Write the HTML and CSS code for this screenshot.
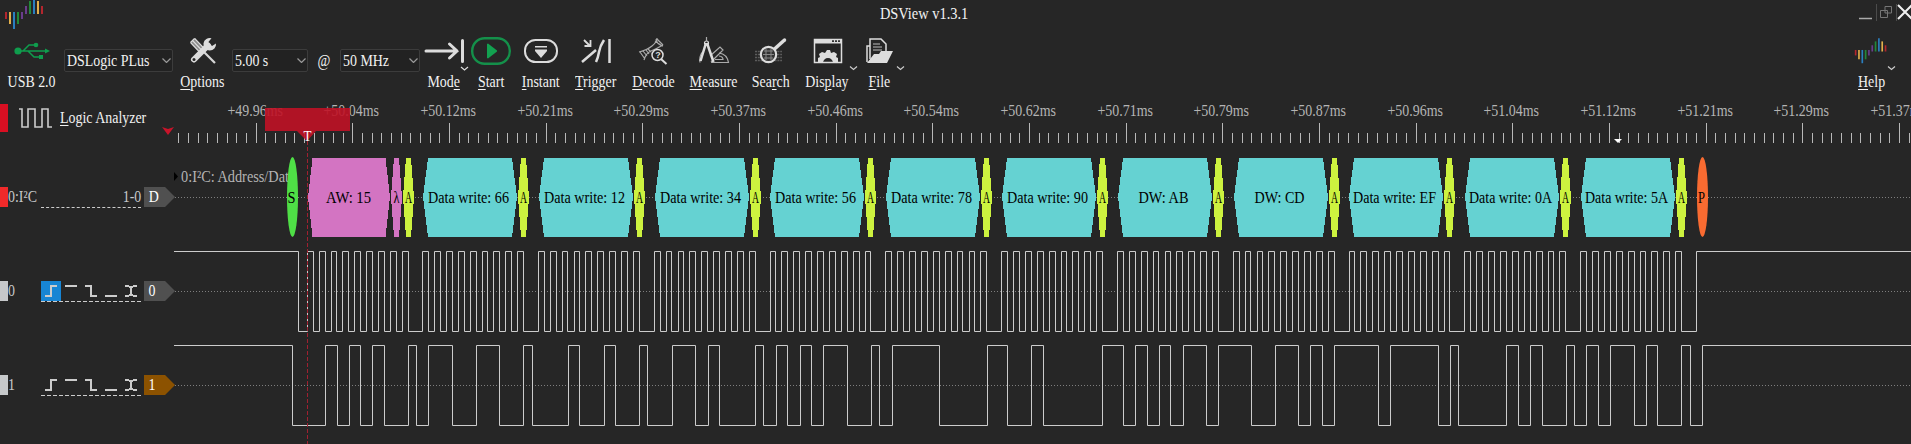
FILE: index.html
```html
<!DOCTYPE html>
<html lang="en">
<head>
<meta charset="utf-8">
<title>DSView v1.3.1</title>
<link rel="stylesheet" href="styles.css">
</head>
<body>
<div class="app">
  <header class="titlebar">
    <svg class="logo" width="44" height="30" viewBox="0 0 44 30"><use href="#bars"/></svg>
    <h1 class="title"><span class="t">DSView v1.3.1</span></h1>
    <svg class="winctl" width="52" height="24" viewBox="0 0 52 24" fill="none">
      <path d="M0 18.5h13" stroke="#aaa" stroke-width="1.5"/>
      <path d="M17.5 4v17M37.500 4v17" stroke="#4c4c4c"/>
      <path d="M26 6.500h6.500v6.500H26zM21.500 10.500h7v7h-7z" stroke="#777"/>
      <path d="M39 5l14 14M53 5L39 19" stroke="#f0f0f0" stroke-width="2"/>
    </svg>
  </header>

  <nav class="toolbar">
    <div class="tool usb"><svg width="36" height="30" viewBox="0 0 36 30" fill="none" stroke="#0f9d4d" stroke-width="1.500">
      <circle cx="4" cy="16" r="3.600" fill="#0f9d4d" stroke="none"/><path d="M5 16h26M9 16l6-6h6M14 16l6 6h6"/><path d="M31 13.500l5 2.500-5 2.500z" fill="#0f9d4d" stroke="none"/><circle cx="22" cy="10" r="2.300" fill="#0f9d4d" stroke="none"/><path d="M25 20h4v4h-4z" fill="#0f9d4d" stroke="none"/></svg><span class="t">USB 2.0</span></div>
    <div class="combo device"><span class="t left">DSLogic PLus</span><svg class="chev" width="9" height="5"><use href="#chev"/></svg></div>
    <div class="tool options"><svg width="28" height="30" viewBox="0 0 28 30">
      <path d="M15 17l11 11" stroke="#d6d6d6" stroke-width="2.200"/>
      <path d="M3.500 5.500l9.500 10" stroke="#8a8a8a" stroke-width="6"/><path d="M1.500 7.500l9.500 10M3.500 5.500l9.500 10M5.700 3.500l9.500 10M1.500 7.500l4-4" stroke="#dcdcdc" stroke-width="1.100"/>
      <path d="M5 24.500L19 10.500" stroke="#dcdcdc" stroke-width="6" stroke-linecap="round"/>
      <path d="M22.500 3.200a6.300 6.300 0 1 0 4.500 5.300l-4 2.500-3.800-3.800z" fill="#dcdcdc"/><circle cx="5" cy="24.500" r="1.500" fill="#262626"/></svg><span class="t"><u>O</u>ptions</span></div>
    <div class="combo duration"><span class="t left">5.00 s</span><svg class="chev" width="9" height="5"><use href="#chev"/></svg></div>
    <span class="at t">@</span>
    <div class="combo rate"><span class="t left">50 MHz</span><svg class="chev" width="9" height="5"><use href="#chev"/></svg></div>
    <div class="tool mode"><svg width="44" height="36" viewBox="0 0 44 36" fill="none" stroke="#dcdcdc" stroke-width="3"><path d="M4 16h31M27.500 9l7.500 7-7.500 7M40.500 5.500v21" stroke-linecap="round"/><path d="M39 32l3.500 3 3.500-3" stroke-width="1.200"/></svg><span class="t">Mod<u>e</u></span></div>
    <div class="tool start"><svg width="42" height="30" viewBox="0 0 42 30"><rect x="2.200" y="3.200" width="37.600" height="25.600" rx="12.500" fill="none" stroke="#14904a" stroke-width="2.400"/><path d="M17 9v14l1 .5 9-7v-1l-9-7z" fill="#12a150"/></svg><span class="t"><u>S</u>tart</span></div>
    <div class="tool instant"><svg width="36" height="30" viewBox="0 0 36 30"><rect x="2" y="5" width="32" height="22" rx="10.500" fill="none" stroke="#dcdcdc" stroke-width="2"/><path d="M12 11h12v1.500H12zM12 14.500h12v1.500l-6 7-6-7z" fill="#dcdcdc"/></svg><span class="t"><u>I</u>nstant</span></div>
    <div class="tool trigger"><svg width="32" height="30" viewBox="0 0 32 30" fill="none" stroke="#dcdcdc" stroke-width="2.500"><path d="M4 5l5.500 5.500M4.500 11h6V5" stroke-width="1.800"/><path d="M2 27l14-12M16 27q2-4 3-10t5-12M29.500 4v24"/></svg><span class="t"><u>T</u>rigger</span></div>
    <div class="tool decode"><svg width="30" height="30" viewBox="0 0 30 30" fill="none" stroke="#aaa" stroke-width="1.200"><path d="M1 17q8-2 13-6t5-8M6 25q2-7 7-9t12-6M2 17l5 7M5 16l4 5M8 15l3 4M17 6l7 5M19 4l6 6M18 4q1 6 7 7M10 14l3 3"/><circle cx="19.500" cy="20" r="5.500" stroke="#ddd" stroke-width="1.500" fill="#262626"/><path d="M23 24l5.500 5" stroke="#ddd" stroke-width="2"/><text x="17.200" y="23.200" class="qm">?</text></svg><span class="t"><u>D</u>ecode</span></div>
    <div class="tool measure"><svg width="32" height="30" viewBox="0 0 32 30" fill="none" stroke="#aaa" stroke-width="1.200"><path d="M12 21L22 12l3 3-12 12M21 18q8 1 9.500 9.500H13M17 24.500h8q0-3-4-3.500M2 27.500q-1-6 2-10"/><path d="M8 8L2.500 26M9 8l6.500 19" stroke="#ddd" stroke-width="2.500"/><circle cx="8.500" cy="8" r="2" stroke="#ddd"/><path d="M8.500 2v4"/></svg><span class="t"><u>M</u>easure</span></div>
    <div class="tool search"><svg width="34" height="30" viewBox="0 0 34 30"><path d="M1 16.500h27M1 19.500h27M1 22.500h27M1 25.500h27" stroke="#5c5c5c" stroke-width="1.500" stroke-dasharray="2 .8"/><path d="M20.500 14L30.500 5" stroke="#ddd" stroke-width="3.500" stroke-linecap="round"/><circle cx="14.500" cy="19.500" r="7.700" fill="#333" stroke="#ddd" stroke-width="2.200"/><path d="M10 16h9M9 19.500h11M10 23h9M12 14v11M17 14v11" stroke="#888"/></svg><span class="t">Sea<u>r</u>ch</span></div>
    <div class="tool display"><svg width="44" height="36" viewBox="-8 0 44 36"><path d="M1.500 4.500h27v23h-27z" fill="none" stroke="#ddd" stroke-width="1.500"/><path d="M1 4h28v4.500H1z" fill="#ddd"/><path d="M19 6.200h8" stroke="#333" stroke-width="1.800" stroke-dasharray="2 1"/><path d="M5 28v-5l2-1-1-3 3-2 3 1 2-3h3l1 3 3-1 3 2-1 3 2 1v5h-5a5 5 0 0 0-10 0z" fill="#ddd"/><path d="M37 31.500l3.500 3 3.500-3" fill="none" stroke="#ccc" stroke-width="1.200"/></svg><span class="t">Dis<u>p</u>lay</span></div>
    <div class="tool file"><svg width="40" height="36" viewBox="-4 0 40 36"><path d="M3 27V11h3M6 24V4h11l5 5v7" fill="none" stroke="#ddd" stroke-width="1.500"/><path d="M9 9h7M9 12h9M9 15h9" stroke="#bbb"/><path d="M3 28l7-9h5l2-3h12l-6 12z" fill="#ddd"/><path d="M33 31.500l3.500 3 3.500-3" fill="none" stroke="#ccc" stroke-width="1.200"/></svg><span class="t"><u>F</u>ile</span></div>
    <div class="tool help"><svg width="42" height="36" viewBox="-4 0 42 36"><use href="#bars" transform="translate(-3.500 5.600) scale(.83 .78)"/><path d="M33 31.500l3.500 3 3.500-3" fill="none" stroke="#ccc" stroke-width="1.200"/></svg><span class="t"><u>H</u>elp</span></div>
  </nav>

  <main class="workspace">
    <aside class="channels">
      <div class="row device-row">
        <i class="mark red"></i>
        <svg class="wave" width="34" height="22" viewBox="0 0 34 22" fill="none" stroke="#ccc" stroke-width="1.600"><path d="M0 2h3v18h6V2h7v18h7V2h6v18h4"/></svg>
        <span class="t left"><u>L</u>ogic Analyzer</span>
      </div>
      <div class="row decoder-row">
        <i class="mark bright"></i><span class="t left name">0:I²C</span>
        <span class="range"><span class="t right">1-0</span></span>
        <span class="tag gray"><b class="t">D</b></span>
      </div>
      <div class="row ch0">
        <i class="mark light"></i><span class="t left name">0</span>
        <svg class="trig" width="100" height="20"><path d="M0 0h20v20H0z" fill="#1785d4"/><use href="#triggers"/></svg>
        <span class="tag gray"><b class="t">0</b></span>
      </div>
      <div class="row ch1">
        <i class="mark light"></i><span class="t left name">1</span>
        <svg class="trig" width="100" height="20"><use href="#triggers"/></svg>
        <span class="tag brown"><b class="t">1</b></span>
      </div>
    </aside>
    <svg id="plot" class="plot" width="1751" height="354" viewBox="160 90 1751 354"></svg>
  </main>

  <svg class="defs" width="0" height="0">
    <defs>
      <g id="bars">
        <path d="M4 12h2v7H4z" fill="#b3262e"/><path d="M8 12h2v12H8z" fill="#e3b04b"/><path d="M12 12h2v17h-2z" fill="#2a7fc0"/><path d="M16 12h2v12h-2z" fill="#22883a"/><path d="M20 12h2v7h-2z" fill="#6a3d8c"/><path d="M24 6h2v8h-2z" fill="#6a3d8c"/><path d="M28 1h2v13h-2z" fill="#22883a"/><path d="M32-3h2v17h-2z" fill="#2a7fc0"/><path d="M36 1h2v13h-2z" fill="#e3b04b"/><path d="M40 6h2v8h-2z" fill="#b3262e"/>
      </g>
      <g id="chev"><path d="M.5.5l4 4 4-4" fill="none" stroke="#999" stroke-width="1.200"/></g>
      <g id="triggers" fill="none" stroke="#ccc" stroke-width="2">
        <path d="M4 15h6V5h6M24 5h12M44 5h6v10h6M64 15h12M84 5h4M92 5h4M84 15h4M92 15h4M90 6v8M88 6h4M88 14h4"/>
        <path d="M0 20.500h101" stroke-width="1" stroke-dasharray="4 2"/>
      </g>
    </defs>
  </svg>
</div>
<script src="plot.js"></script>
</body>
</html>
```
FILE: styles.css
```css
* { box-sizing: border-box; }
body { margin: 0; background: #262626; overflow: hidden; }
.app { width: 1911px; height: 444px; overflow: hidden; background: #262626; color: #f2f2f2; font: 16px/20px "Liberation Serif", serif; display: flex; flex-direction: column; }
svg { display: block; }
.t { display: inline-block; white-space: nowrap; transform: scaleX(.87); font-weight: 400; }
.t.left { transform-origin: left; }
.t.right { transform-origin: right; }
u { text-decoration-thickness: 1px; text-underline-offset: 2px; }

.titlebar { flex: none; height: 30px; display: flex; align-items: flex-start; justify-content: space-between; }
.logo { margin-left: 1px; }
.title { margin: 4px 0 0; font: inherit; padding-right: 56px; }
.title .t { transform: scaleX(.9); }

.toolbar { flex: none; height: 60px; display: flex; align-items: flex-start; }
.tool { flex: none; height: 62px; display: flex; flex-direction: column; align-items: center; justify-content: space-between; padding-top: 5px; }
.tool svg { flex: none; overflow: visible; margin-bottom: -10px; }
.combo { flex: none; height: 23px; margin-top: 19px; border: 1px solid #3c3c3c; border-radius: 2px; background: #222; display: flex; align-items: center; justify-content: space-between; padding: 0 1px 0 2px; }
.usb { width: 64px; }
.device { width: 109px; }
.options { width: 59px; }
.duration { width: 76px; }
.at { width: 32px; text-align: center; margin-top: 21px; }
.rate { width: 80px; }
.mode { width: 47px; }
.start { width: 48px; }
.instant { width: 52px; }
.trigger { width: 58px; }
.decode { width: 56px; }
.measure { width: 65px; }
.search { width: 50px; }
.display { width: 62px; }
.file { width: 43px; }
.help { width: 44px; margin-left: auto; margin-right: 17px; }
.qm { font: 700 9px "Liberation Sans", sans-serif; fill: #ddd; stroke: none; }

.workspace { flex: none; height: 354px; display: flex; }
.channels { width: 160px; flex: none; }
.row { display: flex; align-items: center; width: 175px; height: 20px; color: #c6c8ca; position: relative; }
.mark { width: 8px; height: 20px; flex: none; }
.mark.red { height: 28px; background: #d90f22; }
.mark.bright { background: #f02a2a; }
.mark.light { background: #c6c8ca; }
.device-row { height: 28px; margin-top: 14px; color: #f2f2f2; }
.wave { margin: 0 7px 0 11px; }
.decoder-row { margin-top: 55px; }
.ch0 { margin-top: 74px; }
.ch1 { margin-top: 74px; }
.name { flex: none; width: 33px; }
.range { flex: none; width: 100px; height: 21px; margin-top: 1px; text-align: right; border-bottom: 1px dashed #ccc; }
.trig { flex: none; overflow: visible; }
.tag { flex: none; margin-left: 3px; width: 31px; height: 20px; padding-left: 4px; color: #fff; clip-path: polygon(0 0, 68% 0, 100% 50%, 68% 100%, 0 100%); }
.gray { background: #505050; }
.brown { background: #8c5200; }
.plot { flex: none; font: 16px "Liberation Serif", serif; }
.lbl { fill: #b4b4b4; }
.ann { fill: #000; }
.cursor { fill: #fff; font-size: 14px; }
.tick { stroke: #b8b8b8; }
.mid { stroke: #7e7e7e; stroke-dasharray: 1 2; }
.trace { fill: none; stroke: #ccc; }
```
FILE: plot.js
```js
const parts = [];
const text = (x, y, w, s, cls, anchor = 'start') =>
  parts.push(`<text x="${x}" y="${y}" class="${cls}" text-anchor="${anchor}" textLength="${w}" lengthAdjust="spacingAndGlyphs">${s}</text>`);

// Time ruler
const stamps = ['49.96','50.04','50.12','50.21','50.29','50.37','50.46','50.54','50.62','50.71','50.79','50.87','50.96','51.04','51.12','51.21','51.29','51.37'];
const step = 9.665;
for (let i = -8; i <= 171; i++) {
  const x = Math.floor(256.3 + i * step) + 0.5;
  parts.push(`<path class="tick" d="M${x} ${i % 10 === 0 ? 123 : 133}V143"/>`);
}
stamps.forEach((s, i) => text(Math.floor(256.3 + i * 10 * step) - 28.5, 116, 55.5, `+${s}ms`, 'lbl'));
parts.push('<path d="M162 127l6 2 6-2-6 8z" fill="#c8142a"/>');
parts.push('<path d="M265 108h85v23H265z M297 131h19l-9 10z" fill="#c01226" fill-opacity=".9"/>');
parts.push('<path d="M1614 139h8l-4 4z" fill="#fff"/>');

// Centre lines
[197, 291, 385].forEach(y => parts.push(`<path class="mid" d="M175 ${y}.5H1911"/>`));
parts.push('<path d="M174 172v9l4-4.500z" fill="#000"/>');
text(181, 182, 108, '0:I²C: Address/Dat', 'lbl');

// Decoder annotations
const hex = (l, r, s, color, label, w, tx) => {
  parts.push(`<path shape-rendering="crispEdges" fill="${color}" d="M${l} 197L${l + s} 158H${r - s}L${r} 197L${r - s} 237H${l + s}z"/>`);
  text(tx ?? (l + r) / 2, 203, w, label, 'ann', 'middle');
};
parts.push('<ellipse cx="292.500" cy="197" rx="5.500" ry="40" fill="#4fdf46"/>');
text(287.5, 203, 8, 'S', 'ann');
hex(308, 390, 4.5, '#d374c2', 'AW: 15', 45, 348.5);
hex(391, 402, 3, '#d374c2', 'λ', 6);
hex(403, 414, 3, '#cdf23f', 'A', 7);
const bytes = ['66', '12', '34', '56', '78', '90', 'AB', 'CD', 'EF', '0A', '5A'];
bytes.forEach((b, i) => {
  const l = Math.round(423 + i * 115.8);
  const short = b === 'AB' || b === 'CD';
  hex(l, l + 94, 5, '#65d2d2', (short ? 'DW: ' : 'Data write: ') + b, short ? 50 : b === 'EF' || b[1] === 'A' ? 83 : 81, l + 45.5);
  hex(l + 95, l + 106, 3, '#cdf23f', 'A', 7);
});
parts.push('<ellipse cx="1702.500" cy="197" rx="5.500" ry="40" fill="#f96b31"/>');
text(1698, 203, 7, 'P', 'ann');

// Logic traces: x positions of alternating edges, starting high
const clock = [298,307,313,319,325,331,336,342,348,354,360,366,372,378,384,390,396,402,408,422,428,434,440,446,452,458,464,470,476,482,487,493,499,505,511,517,523,538,544,550,556,562,567,574,579,585,591,597,603,609,615,621,627,633,639,654,660,666,671,678,683,689,695,701,707,713,719,725,731,737,743,749,755,770,775,781,787,793,799,805,811,817,823,829,835,841,847,853,859,865,870,885,891,897,903,909,915,921,927,933,939,945,951,957,962,969,974,980,986,1001,1007,1013,1019,1025,1031,1037,1043,1049,1055,1061,1066,1072,1078,1084,1090,1096,1102,1117,1123,1129,1135,1141,1147,1153,1158,1165,1170,1176,1182,1188,1194,1200,1206,1212,1218,1233,1239,1245,1250,1257,1262,1268,1274,1280,1286,1292,1298,1304,1310,1316,1322,1328,1334,1349,1354,1360,1366,1372,1378,1384,1390,1396,1402,1408,1414,1420,1426,1432,1438,1444,1449,1464,1470,1476,1482,1488,1494,1500,1506,1512,1518,1524,1530,1536,1542,1548,1553,1559,1565,1580,1586,1592,1598,1604,1610,1616,1622,1628,1634,1640,1645,1651,1657,1663,1669,1675,1681,1696];
const data = [292,325,337,349,360,372,384,408,416,428,452,476,499,523,532,568,579,604,615,639,647,672,695,708,719,755,763,776,787,800,811,823,847,871,879,892,939,987,1007,1031,1043,1102,1123,1135,1147,1159,1170,1183,1206,1218,1251,1275,1298,1310,1322,1334,1378,1390,1438,1450,1458,1506,1518,1530,1542,1566,1574,1586,1598,1610,1634,1646,1657,1681,1690,1702];
const trace = (edges, hi, lo) => {
  let d = `M174 ${hi}.5`;
  edges.forEach((x, i) => { d += `H${x}.5V${i % 2 ? hi : lo}.5`; });
  parts.push(`<path class="trace" d="${d}H1911"/>`);
};
trace(clock, 251, 331);
trace(data, 345, 425);

// Trigger cursor
parts.push('<path d="M307.500 141V444" stroke="#a02030" stroke-dasharray="4 2"/>');
text(303.500, 140.500, 8, 'T', 'cursor');
document.getElementById('plot').innerHTML = parts.join('');
```
